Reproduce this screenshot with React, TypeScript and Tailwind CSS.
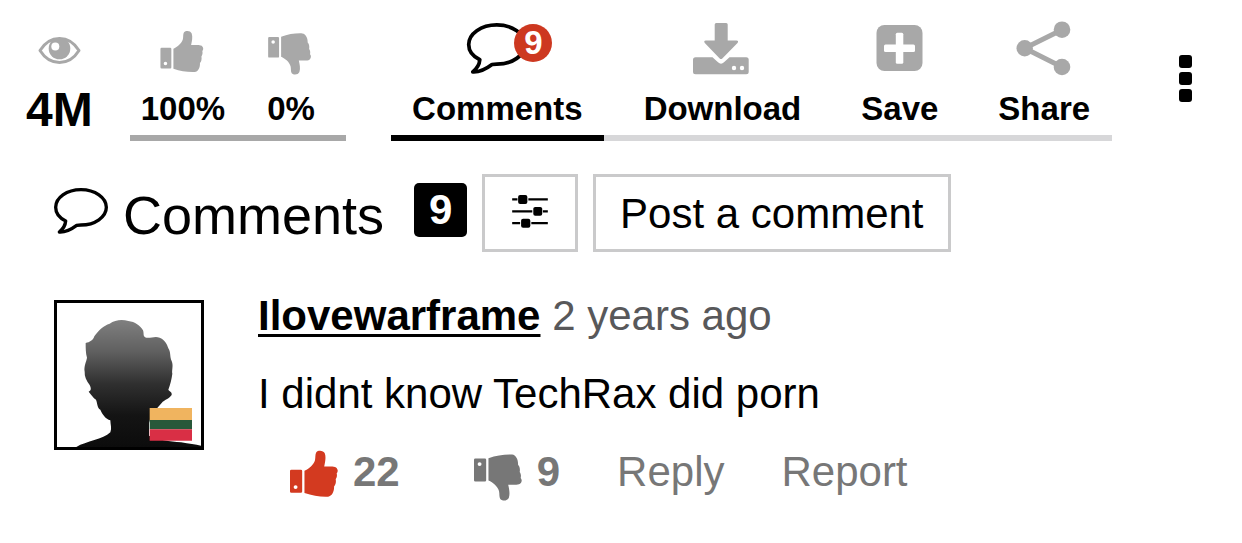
import React from "react";

function Thumb({ down = false, viewBox, className }: { down?: boolean; viewBox: string; className: string }) {
  return (
    <svg viewBox={viewBox} className={className} fill="currentColor" aria-hidden="true">
      <g transform={down ? "translate(0 142) scale(1 -1)" : undefined}>
        <path
          fillRule="evenodd"
          d="M4 59H33Q37 59 37 63V125Q37 129 33 129H4Q0 129 0 125V63Q0 59 4 59ZM17 106A6 6 0 1 0 17 118A6 6 0 1 0 17 106Z"
        />
        <path d="M44 62C58 56 72 44 76 30C78 22 76 12 80 6C86 -1 102 0 106 10C110 22 107 36 104 49C118 50 132 47 140 52C147 58 146 66 142 70C144 78 142 84 139 88C141 98 138 106 134 110C135 124 128 140 116 141C92 142 68 138 44 130Z" />
      </g>
    </svg>
  );
}

function Bubble({ viewBox, className }: { viewBox: string; className: string }) {
  return (
    <svg viewBox={viewBox} className={className} fill="none" stroke="currentColor" strokeWidth="10" strokeLinejoin="round" aria-hidden="true">
      <path d="M68 112C52 124 32 133 16 132C26 124 34 112 35 99C16 90 5 75 5 58C5 29 38 5 81 5C123 5 157 29 157 58C157 87 123 111 81 111C76 111 72 111 68 112Z" />
    </svg>
  );
}

function EyeIcon() {
  return (
    <svg viewBox="0 0 64 64" className="h-16 w-16 text-[#a8a8a8]" aria-hidden="true">
      <path d="M13 34.500C23 18.500 42 18.500 52 34.500C42 50.500 23 50.500 13 34.500Z" fill="none" stroke="currentColor" strokeWidth="3" strokeLinejoin="round" />
      <circle cx="32.500" cy="32.500" r="10.800" fill="currentColor" />
      <circle cx="28.300" cy="30.500" r="4" fill="#fff" />
    </svg>
  );
}

function DownloadIcon() {
  return (
    <svg viewBox="0 0 64 64" className="h-16 w-16" fill="currentColor" aria-hidden="true">
      <path
        fillRule="evenodd"
        d="M5.500 41.300H22.500L28 46.300Q31 49 34 46.300L39.500 41.300H56.200Q58.700 41.300 58.700 43.800V55.800Q58.700 58.300 56.200 58.300H5.500Q3 58.300 3 55.800V43.800Q3 41.300 5.500 41.300ZM44 49.800A2.200 2.200 0 1 0 44 54.200A2.200 2.200 0 1 0 44 49.800ZM52 49.800A2.200 2.200 0 1 0 52 54.200A2.200 2.200 0 1 0 52 49.800Z"
      />
      <path d="M26.200 7H36.200Q37.700 7 37.700 8.500V24.500H46.500Q49 24.700 47.500 27L32.300 42.500Q31 43.700 29.700 42.500L14.800 27Q13.300 24.700 15.800 24.500H24.700V8.500Q24.700 7 26.200 7Z" />
    </svg>
  );
}

function SaveIcon() {
  return (
    <svg viewBox="0 0 64 64" className="h-16 w-16" aria-hidden="true">
      <rect x="8.500" y="9" width="46" height="46" rx="8" fill="currentColor" />
      <rect x="16" y="28.500" width="31" height="7.500" rx="1.500" fill="#fff" />
      <rect x="27.800" y="16.800" width="7.500" height="31" rx="1.500" fill="#fff" />
    </svg>
  );
}

function ShareIcon() {
  return (
    <svg viewBox="0 0 64 64" className="h-16 w-16" fill="currentColor" aria-hidden="true">
      <path d="M50 13.700L12.700 32.300L50 51" fill="none" stroke="currentColor" strokeWidth="5" />
      <circle cx="12.700" cy="32.300" r="8.200" />
      <circle cx="50" cy="13.700" r="8.300" />
      <circle cx="50" cy="51" r="8.300" />
    </svg>
  );
}

function SlidersIcon() {
  return (
    <svg viewBox="0 0 108 100" className="h-[33px] w-9" fill="currentColor" aria-hidden="true">
      <path d="M0 10H16V17H0ZM49 10H108V17H49ZM0 46H61V53H0ZM93 46H108V53H93ZM0 82H24V89H0ZM58 82H108V89H58Z" />
      <rect x="18" y="0" width="28" height="27" rx="6" />
      <rect x="64" y="36" width="27" height="27" rx="6" />
      <rect x="27" y="72" width="28" height="27" rx="6" />
    </svg>
  );
}

function Avatar() {
  return (
    <svg viewBox="0 0 432 432" className="mt-2 h-[150px] w-[150px] shrink-0 border-3 border-black" role="img" aria-label="Ilovewarframe, Lithuania">
      <defs>
        <linearGradient id="silhouette" x1="0" y1="50" x2="0" y2="432" gradientUnits="userSpaceOnUse">
          <stop offset="0" stopColor="#808080" />
          <stop offset="0.250" stopColor="#606060" />
          <stop offset="0.500" stopColor="#303030" />
          <stop offset="0.750" stopColor="#141414" />
          <stop offset="1" stopColor="#0c0c0c" />
        </linearGradient>
      </defs>
      <path
        fill="url(#silhouette)"
        d="M58 432C88 414 138 410 160 388C165 376 160 364 160 352C146 348 136 334 130 320C120 314 122 302 117 290C108 284 104 276 95 266C104 262 102 254 98 246C88 232 82 220 83 206C80 190 88 176 90 164C86 150 86 136 86 120C98 118 108 112 112 100C124 82 140 68 158 62C174 50 196 48 214 54C234 56 250 68 258 82C262 92 256 102 268 104C282 106 294 98 308 104C322 110 330 122 334 136C342 148 338 162 344 174C350 188 344 200 346 212C344 228 340 244 334 260C338 266 346 266 344 276C336 288 322 290 314 300C298 318 282 336 276 360V398C300 412 340 414 372 418C396 422 416 424 432 428V432Z"
      />
      <path d="M278 315H405V351H278Z" fill="#f0b45f" />
      <path d="M278 351H405V379H278Z" fill="#28583a" />
      <path d="M278 379H405V413H278Z" fill="#d92f45" />
    </svg>
  );
}

function Tab({ label, children }: { label: string; children: React.ReactNode }) {
  return (
    <button type="button" className="flex cursor-pointer flex-col items-center gap-2.5 pb-[7px]">
      <span className="text-[#a8a8a8]">{children}</span>
      <span className="text-[33px] leading-[38px] font-bold">{label}</span>
    </button>
  );
}

export default function App() {
  return (
    <main className="min-h-screen bg-white pb-10 font-['Liberation_Sans',Arial,sans-serif] text-black">
      <header className="flex items-start pt-4 pr-[50px] pl-[26px]">
        <div className="flex flex-col items-center gap-0.5">
          <EyeIcon />
          <strong className="text-[48px] leading-[55px]">4M</strong>
        </div>

        <div className="ml-[37px] flex gap-[34px] border-b-6 border-[#a8a8a8] pr-[23px] pl-[11px]">
          <Tab label="100%">
            <Thumb viewBox="-32 -49 217 217" className="h-16 w-16" />
          </Tab>
          <Tab label="0%">
            <Thumb down viewBox="-31 -58 217 217" className="h-16 w-16" />
          </Tab>
        </div>

        <nav className="ml-[45px] flex">
          <button type="button" className="flex cursor-pointer flex-col items-center gap-2.5 border-b-6 border-black px-[21px] pb-[7px]">
            <span className="relative">
              <Bubble viewBox="-5 -19 172.800 172.800" className="h-16 w-16" />
              <span className="absolute top-2 left-[49px] h-[38px] w-[38px] rounded-full bg-[#cd3820] text-center text-[33px] leading-[38px] font-bold text-white">
                9
              </span>
            </span>
            <span className="text-[33px] leading-[38px] font-bold">Comments</span>
          </button>
          <div className="flex gap-[60px] border-b-6 border-[#d7d7d9] pr-[22px] pl-10">
            <Tab label="Download">
              <DownloadIcon />
            </Tab>
            <Tab label="Save">
              <SaveIcon />
            </Tab>
            <Tab label="Share">
              <ShareIcon />
            </Tab>
          </div>
        </nav>

        <button type="button" aria-label="More options" className="mt-[39px] ml-auto flex cursor-pointer flex-col gap-1">
          <span className="h-[13px] w-[13px] rounded-[3px] bg-black" />
          <span className="h-[13px] w-[13px] rounded-[3px] bg-black" />
          <span className="h-[13px] w-[13px] rounded-[3px] bg-black" />
        </button>
      </header>

      <section>
        <div className="mt-[33px] flex items-center gap-[15px] pl-[54px]">
          <h2 className="mr-[15px] flex items-center gap-[15px] pb-1 text-[54px] leading-[60px]">
            <Bubble viewBox="0 0 162 138" className="h-[46px] w-[54px]" />
            <span className="pt-2">Comments</span>
          </h2>
          <span className="mb-1.5 h-[54px] w-[53px] rounded-[5px] bg-black text-center text-[42px] leading-[54px] font-bold text-white">9</span>
          <button type="button" aria-label="Sort comments" className="flex h-[78px] w-24 cursor-pointer items-center justify-center border-3 border-[#cacacb] pb-1">
            <SlidersIcon />
          </button>
          <button type="button" className="h-[78px] cursor-pointer border-3 border-[#cacacb] px-6 pt-0.5 text-[42px] leading-[48px]">
            Post a comment
          </button>
        </div>

        <article className="mt-10 flex items-start gap-[54px] pl-[54px] text-[42px] leading-[48px]">
          <Avatar />
          <div>
            <p className="text-[#58585a]">
              <a href="#profile" className="font-bold text-black underline decoration-3 underline-offset-4">Ilovewarframe</a> 2 years ago
            </p>
            <p className="mt-[30px]">I didnt know TechRax did porn</p>
            <div className="mt-6 flex items-center pl-8 text-[#777]">
              <button type="button" aria-label="Like, 22" className="flex cursor-pointer items-center gap-[15px] font-bold">
                <Thumb viewBox="0 -24 146 180" className="h-[60px] w-12 text-[#d33a20]" />
                22
              </button>
              <button type="button" aria-label="Dislike, 9" className="ml-[74px] flex cursor-pointer items-center gap-[15px] font-bold">
                <Thumb down viewBox="0 -36 146 180" className="h-[60px] w-12" />
                9
              </button>
              <button type="button" className="ml-[57px] cursor-pointer">Reply</button>
              <button type="button" className="ml-[57px] cursor-pointer">Report</button>
            </div>
          </div>
        </article>
      </section>
    </main>
  );
}
